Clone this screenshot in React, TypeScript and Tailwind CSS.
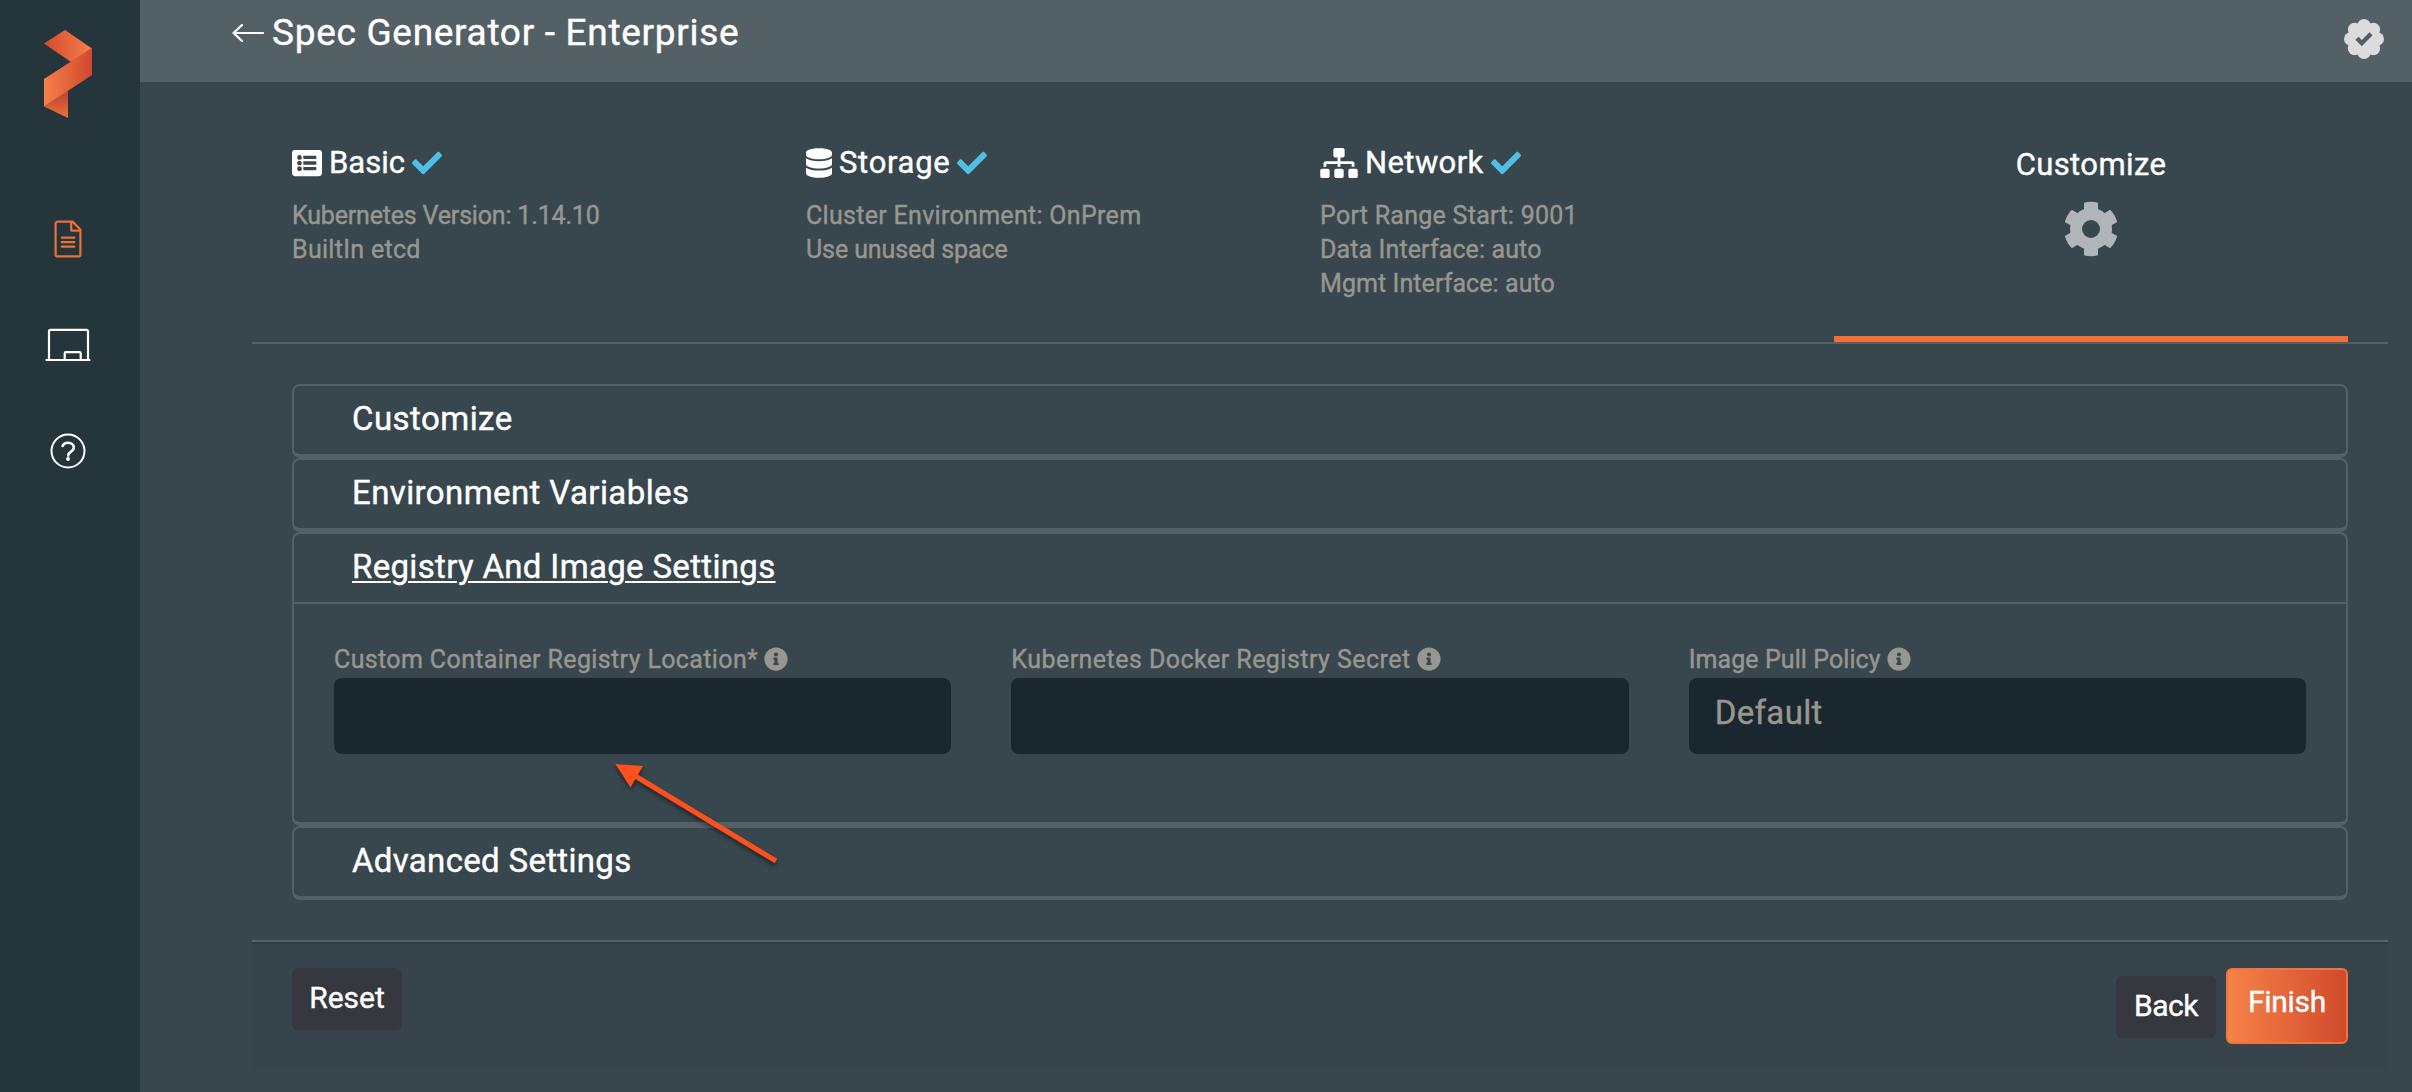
import React from "react";
import type { ReactNode } from "react";
import { FaCheck, FaDatabase, FaInfoCircle, FaListAlt, FaSitemap } from "react-icons/fa";

function Logo() {
  return (
    <svg className="h-[88px] w-[48px]" viewBox="44 30 48 88">
      <defs>
        <linearGradient id="logo-top" x1="0" x2="1" y1="0" y2="0">
          <stop offset="0" stopColor="#d44a2f" />
          <stop offset="1" stopColor="#f58048" />
        </linearGradient>
        <linearGradient id="logo-mid" x1="0" x2="1" y1="0" y2="0">
          <stop offset="0" stopColor="#f68148" />
          <stop offset="1" stopColor="#cf482e" />
        </linearGradient>
        <linearGradient id="logo-low" x1="0" x2="0" y1="0" y2="1">
          <stop offset="0" stopColor="#b94130" />
          <stop offset="1" stopColor="#ee7038" />
        </linearGradient>
      </defs>
      <polygon points="44,43.5 65,30 92,48.5 71,62" fill="url(#logo-top)" />
      <polygon points="68,90 68,118 44,106.5" fill="url(#logo-low)" />
      <polygon points="92,48 92,75 44,106.5 44,79" fill="url(#logo-mid)" />
    </svg>
  );
}

function DocumentIcon() {
  return (
    <svg className="h-[38px] w-[28px]" viewBox="0 0 28 38" fill="none" stroke="#ee6f38" strokeWidth="2.2" strokeLinecap="round" strokeLinejoin="round">
      <path d="M18.5 1.6H3.6a2 2 0 0 0-2 2v30.8a2 2 0 0 0 2 2h20.8a2 2 0 0 0 2-2V9.5z" />
      <path d="M17.2 1.8V10.6H26" />
      <path d="M7.8 17.6h12.6M7.8 22.2h12.6M7.8 26.6h12.6" />
    </svg>
  );
}

function LaptopIcon() {
  return (
    <svg className="h-[34px] w-[46px]" viewBox="0 0 46 34" fill="none" stroke="#fff" strokeWidth="2.2" strokeLinejoin="round">
      <path d="M4 31.6V3.4a1.6 1.6 0 0 1 1.6-1.6h35.8A1.6 1.6 0 0 1 43 3.4v28.2" />
      <path d="M.6 32h44.8" />
      <path d="M19.7 31.6V25.400a1.200 1.200 0 0 1 1.200-1.200h13.600a1.200 1.200 0 0 1 1.200 1.200v6.200" />
    </svg>
  );
}

function HelpIcon() {
  return (
    <svg className="h-[36px] w-[36px]" viewBox="0 0 36 36" fill="none" stroke="#fff" strokeLinecap="round" strokeLinejoin="round">
      <circle cx="18" cy="18" r="16.500" strokeWidth="2" />
      <path d="M12.600 13c1-2.200 3-3.200 5.400-3.200 3.200 0 5.800 1.700 5.800 4.800 0 4.400-5.600 3.700-5.600 8" strokeWidth="2.600" />
      <circle cx="18" cy="26" r="1.900" fill="#fff" stroke="none" />
    </svg>
  );
}

function BackArrow() {
  return (
    <svg className="h-[20px] w-[32px]" viewBox="0 0 32 20" fill="none" stroke="#fff" strokeWidth="2.200" strokeLinecap="round" strokeLinejoin="round">
      <path d="M10 2 1.500 10l8.500 8M1.500 10H31" />
    </svg>
  );
}

function VerifiedBadge() {
  return (
    <svg className="h-[40px] w-[40px]" viewBox="-20 -20 40 40">
      <g fill="#dcdcdc">
        <circle r="14.500" />
        {[0, 45, 90, 135, 180, 225, 270, 315].map((a) => (
          <circle key={a} cy="-13.200" r="6.800" transform={`rotate(${a})`} />
        ))}
      </g>
      <path d="M-7-.8-2.200 4.200 7-5.200" fill="none" stroke="#536065" strokeWidth="4.400" />
    </svg>
  );
}

function GearIcon() {
  const tooth = "M-7-26.200A27.100 27.100 0 0 1 7-26.200V-16H-7z";
  return (
    <svg className="h-[56px] w-[56px]" viewBox="-28 -28 56 56" fill="#afb5b9">
      <circle r="15" fill="none" stroke="#afb5b9" strokeWidth="12" />
      {[0, 60, 120, 180, 240, 300].map((a) => (
        <path key={a} d={tooth} transform={`rotate(${a})`} />
      ))}
    </svg>
  );
}

function Step({ icon, title, lines }: { icon: ReactNode; title: ReactNode; lines: ReactNode[] }) {
  return (
    <div className="pt-[61px]">
      <div className="flex h-10 items-center text-[31px] leading-10 text-white">
        {icon}
        <span className="ml-[7px]">{title}</span>
        <FaCheck className="ml-[7px] h-[30px] w-[30px] text-[#51bfe5]" />
      </div>
      <div className="mt-[16px] text-[25px] leading-[34px] text-[#97978f]">
        {lines.map((line, i) => (
          <div key={i}>{line}</div>
        ))}
      </div>
    </div>
  );
}

function Panel({ title, children }: { title: ReactNode; children?: ReactNode }) {
  return (
    <section className="rounded-lg border-2 border-b-4 border-[#536065]">
      <h2 className="h-[68px] pl-[58px] text-[33px] leading-[65px] text-white">{title}</h2>
      {children}
    </section>
  );
}

function Field({ label, value }: { label: ReactNode; value?: string }) {
  return (
    <div>
      <div className="flex h-[37px] items-center text-[25px] text-[#97978f]">
        {label}
        <FaInfoCircle className="mb-[2px] ml-[6px] h-6 w-6" />
      </div>
      <div className="h-[76px] rounded-lg bg-[#1a272e] pl-[26px] text-[33px] leading-[69px] tracking-[0.35px] text-[#97978f]">
        {value}
      </div>
    </div>
  );
}

export default function App() {
  return (
    <div className="relative flex h-[1092px] w-[2412px] overflow-hidden whitespace-nowrap bg-[#38474e] font-['Roboto',sans-serif] [-webkit-text-stroke:0.4px_currentColor]">
      <aside className="flex w-[140px] shrink-0 flex-col items-center bg-[#25353c] pr-[4px] pt-[30px]">
        <Logo />
        <nav className="mt-[102px] flex flex-col items-center">
          <DocumentIcon />
          <div className="mt-[70px]">
            <LaptopIcon />
          </div>
          <div className="mt-[71px]">
            <HelpIcon />
          </div>
        </nav>
      </aside>

      <div className="flex-1">
        <header className="flex h-[82px] items-start justify-between bg-[#536065] pl-[92px] pr-[28px]">
          <div className="flex h-[66px] items-center gap-[8px]">
            <BackArrow />
            <h1 className="text-[37px] leading-[66px] tracking-[0.7px] text-white">Spec Generator - Enterprise</h1>
          </div>
          <div className="pt-[19px]">
            <VerifiedBadge />
          </div>
        </header>

        <main className="ml-[112px] mr-[24px]">
          <div className="grid h-[262px] grid-cols-4 border-b-2 border-[#536065] px-10">
            <Step
              icon={<FaListAlt className="h-[30px] w-[30px] text-white" />}
              title="Basic"
              lines={[
                <span className="tracking-[-0.18px]">Kubernetes Version: 1.14.10</span>,
                <span className="tracking-[0.3px]">BuiltIn etcd</span>,
              ]}
            />
            <Step
              icon={<FaDatabase className="h-[30px] w-[26px] text-white" />}
              title={<span className="tracking-[0.7px]">Storage</span>}
              lines={[
                <span className="tracking-[0.3px]">Cluster Environment: OnPrem</span>,
                <span className="tracking-[-0.1px]">Use unused space</span>,
              ]}
            />
            <Step
              icon={<FaSitemap className="h-[30px] w-[38px] text-white" />}
              title={<span className="tracking-[0.4px]">Network</span>}
              lines={[
                <span className="tracking-[0.27px]">Port Range Start: 9001</span>,
                <span className="tracking-[0.12px]">Data Interface: auto</span>,
                <span className="tracking-[0.08px]">Mgmt Interface: auto</span>,
              ]}
            />
            <div className="flex flex-col items-center border-b-[6px] border-[#ee6f38] pt-[63px]">
              <div className="text-[31px] leading-10 tracking-[0.4px] text-white">Customize</div>
              <div className="mt-[16px]">
                <GearIcon />
              </div>
            </div>
          </div>

          <div className="px-10 py-10">
            <Panel title={<span className="tracking-[0.45px]">Customize</span>} />
            <Panel title={<span className="tracking-[0.4px]">Environment Variables</span>} />
            <Panel
              title={
                <span className="tracking-[0.33px] underline decoration-2 underline-offset-[3px]">
                  Registry And Image Settings
                </span>
              }
            >
              <div className="grid h-[220px] grid-cols-3 gap-x-[60px] border-t-2 border-[#536065] px-10 pt-[37px]">
                <Field label={<span className="tracking-[0.37px]">Custom Container Registry Location*</span>} />
                <Field label={<span className="tracking-[0.46px]">Kubernetes Docker Registry Secret</span>} />
                <Field label={<span className="tracking-[0.08px]">Image Pull Policy</span>} value="Default" />
              </div>
            </Panel>
            <Panel title={<span className="tracking-[0.32px]">Advanced Settings</span>} />
          </div>

          <footer className="flex h-[128px] items-start justify-between rounded-b-md border-t-2 border-[#536065] bg-[#37444b] px-10 pt-[26px] text-[30px] text-white shadow-[inset_0_2px_0_#303a42]">
            <button className="h-[62px] w-[110px] rounded-md bg-[#35383f] pb-[2px] leading-[60px]">Reset</button>
            <div className="flex items-start gap-[10px]">
              <button className="mt-2 h-[62px] w-[100px] rounded-md bg-[#35383f] pb-[3px] leading-[59px] tracking-[-0.5px]">
                Back
              </button>
              <button className="h-[76px] w-[122px] rounded-md border-2 border-[#f0743b] bg-linear-to-r from-[#f68248] to-[#d1492c] pb-[9px] leading-[63px] tracking-[-0.3px]">
                Finish
              </button>
            </div>
          </footer>
        </main>
      </div>

      {/* Callout arrow pointing at the registry location field */}
      <svg
        className="pointer-events-none absolute left-[605px] top-[755px] h-[120px] w-[190px] drop-shadow-[0_3px_2px_rgba(0,0,0,0.45)]"
        viewBox="605 755 190 120"
      >
        <path d="M636 776.500 776 861" stroke="#fe501c" strokeWidth="5" />
        <polygon points="615.300,764 643,766 630.500,787.500" fill="#fe501c" />
      </svg>
    </div>
  );
}
